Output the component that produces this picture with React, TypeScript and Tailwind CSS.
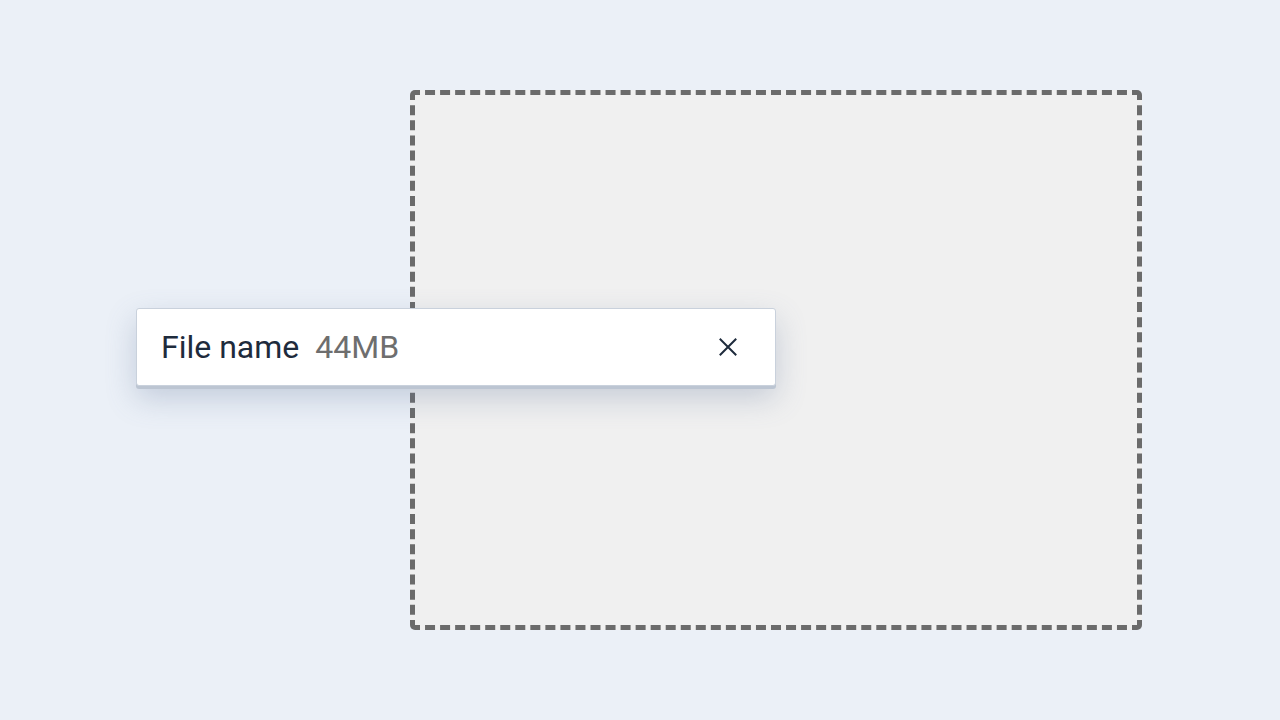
export default function App() {
  return (
    <div className="relative w-full h-[720px] bg-[#ebf0f7] font-['Roboto',_'Liberation_Sans',_sans-serif] overflow-hidden">
      <div className="flex pt-[90px] pl-[410px]">
        {/* drop zone */}
        <div className="w-[732px] h-[540px] rounded-[5px] border-[5px] border-dashed border-[#6b6b6b] bg-[#f0f0f0]" />
      </div>

      {/* uploaded file chip, lies over the drop zone */}
      <div className="absolute left-[136px] top-[308px] w-[640px] h-[78px] flex items-center pl-6 pr-[35px] bg-white border border-[#c9d1dc] rounded-[3px] shadow-[0_3px_0_#bcc5d2,0_12px_30px_rgba(100,120,155,0.3)]">
        <span className="text-[32px] leading-none text-[#1e2b3c]">File name</span>
        <span className="ml-4 text-[32px] leading-none text-[#6e6e6e]">44MB</span>
        <button className="ml-auto flex items-center justify-center w-6 h-6">
          <svg width="18" height="18" viewBox="0 0 18 18" fill="none" stroke="#1e2b3c" strokeWidth="2" strokeLinecap="square">
            <path d="M1.5 1.5 L16.5 16.5 M16.5 1.5 L1.5 16.5" />
          </svg>
        </button>
      </div>
    </div>
  );
}
